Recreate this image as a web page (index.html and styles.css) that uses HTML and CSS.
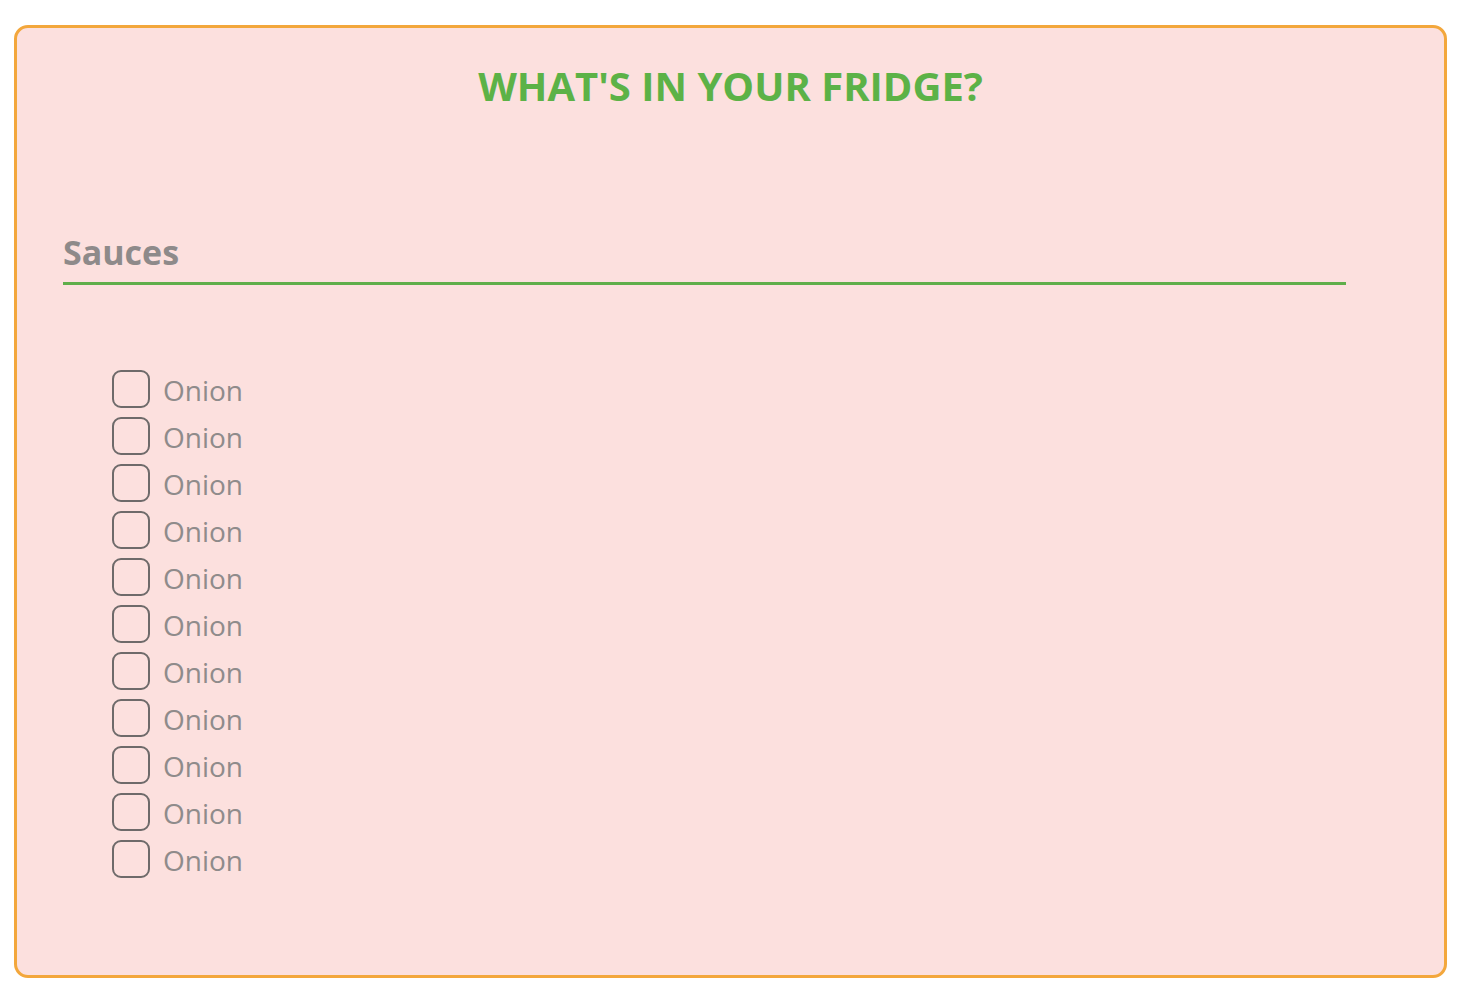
FILE: index.html
```html
<!DOCTYPE html>
<html lang="en">
<head>
  <meta charset="UTF-8" />
  <meta name="viewport" content="width=device-width, initial-scale=1.0"/>
  <title>What's in your fridge?</title>
  <link rel="stylesheet" href="styles.css">
</head>
<body>
  <div class="fridge">
    <h1 class="fridge-title">WHAT'S IN YOUR FRIDGE?</h1>

    <h2 class="group-title">Sauces</h2>

    <ul class="items">
      <li><label class="item"><input type="checkbox"><span>Onion</span></label></li>
      <li><label class="item"><input type="checkbox"><span>Onion</span></label></li>
      <li><label class="item"><input type="checkbox"><span>Onion</span></label></li>
      <li><label class="item"><input type="checkbox"><span>Onion</span></label></li>
      <li><label class="item"><input type="checkbox"><span>Onion</span></label></li>
      <li><label class="item"><input type="checkbox"><span>Onion</span></label></li>
      <li><label class="item"><input type="checkbox"><span>Onion</span></label></li>
      <li><label class="item"><input type="checkbox"><span>Onion</span></label></li>
      <li><label class="item"><input type="checkbox"><span>Onion</span></label></li>
      <li><label class="item"><input type="checkbox"><span>Onion</span></label></li>
      <li><label class="item"><input type="checkbox"><span>Onion</span></label></li>
    </ul>
  </div>
</body>
</html>
```

FILE: styles.css
```css
body { margin: 0; padding: 25px 19px 0 14px; background: #fff; font-family: "Open Sans", sans-serif; }
.fridge { background: #fce0de; border: 3px solid #f3a73c; border-radius: 14px; padding: 30px 0 97px; }
.fridge-title { margin: 0; text-align: center; color: #5cb247; font-size: 40px; font-weight: 700; line-height: normal; }
.group-title { margin: 116px 98px 0 46px; padding-bottom: 7px; border-bottom: 3px solid #5fae4a; color: #8e8a8a; font-size: 34px; font-weight: 700; line-height: normal; }
.items { list-style: none; margin: 85px 0 0; padding: 0 0 0 95px; display: flex; flex-direction: column; gap: 9px; }
.item { display: flex; align-items: flex-end; gap: 13px; height: 38px; color: #8f8b8b; font-size: 28px; cursor: pointer; }
.item span { line-height: 26px; padding-bottom: 5px; }
.item input { appearance: none; -webkit-appearance: none; margin: 0; width: 38px; height: 38px; box-sizing: border-box; border: 2px solid #6e6a6a; border-radius: 9px; background: transparent; cursor: pointer; }
.item input:checked { background: #5fae4a; border-color: #5fae4a; }
```
